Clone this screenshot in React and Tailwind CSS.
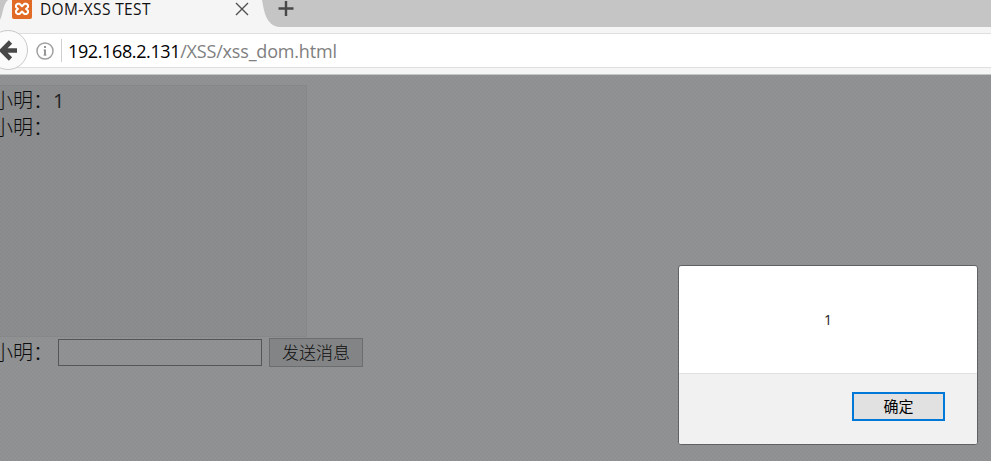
function Favicon() {
  return (
    <svg className="block shrink-0" width="20" height="19" viewBox="0 0 20 19">
      <rect x="0" y="-2" width="20" height="21" rx="2" fill="#e06a26" />
      <path d="M5.5 3.8H7.5L10 6.3L12.5 3.8H14.5L16 5.3V7L14 8.9L16 10.8V12.5L14.5 14H12.5L10 11.5L7.5 14H5.5L4 12.5V10.8L6 8.9L4 7V5.3Z" fill="none" stroke="#fff" strokeWidth="2" strokeLinejoin="round" />
    </svg>
  );
}

function TabBar() {
  return (
    <div className="flex h-[27px] bg-[#c5c5c5]">
      <svg className="block shrink-0 -mr-3" width="12" height="27" viewBox="0 0 12 27">
        <path d="M0 27V20C3 14 3 4 8 0H12V27Z" fill="#f5f5f5" />
      </svg>
      <div className="flex h-[27px] w-[262px] shrink-0 pl-3">
        <div className="flex h-[27px] w-full bg-[#f5f5f5]">
          <Favicon />
          <span className="ml-2 h-[18px] w-[195px] whitespace-nowrap text-[15.5px] leading-[18px] tracking-[0.37px] text-[#111]">DOM-XSS TEST</span>
          <svg className="mt-[2px] block shrink-0" width="14" height="14" viewBox="0 0 14 14">
            <path d="M1 1L13 13M13 1L1 13" stroke="#505050" strokeWidth="1.4" />
          </svg>
        </div>
      </div>
      <svg className="block shrink-0" width="40" height="27" viewBox="0 0 40 27">
        <path d="M0 0C2 9 3 26 18 27H0Z" fill="#f5f5f5" />
        <path d="M16.5 8.5H31.5M24 1V16" stroke="#484848" strokeWidth="2.4" />
      </svg>
    </div>
  );
}

function AddressBar() {
  return (
    <div className="flex h-[48px] items-start border-b border-[#c3c7c8] bg-[#f5f5f5]">
      <svg className="relative z-10 mt-[2px] -mr-7 block shrink-0" width="28" height="42" viewBox="0 0 28 42">
        <circle cx="8" cy="21" r="19.5" fill="#fbfbfb" stroke="#c9c9c9" />
        <path d="M17 21.5H3M10.5 13L2 21.5L10.5 30" fill="none" stroke="#484848" strokeWidth="4.6" />
      </svg>
      <div className="mt-[6px] flex h-[35px] flex-1 items-center border-y border-[#dfdfdf] bg-white pl-[36px]">
        <svg className="block shrink-0" width="18" height="18" viewBox="0 0 18 18">
          <circle cx="9" cy="9" r="8" fill="none" stroke="#a0a0a0" strokeWidth="1.5" />
          <path d="M9 4V6M9 7.6V13.4" stroke="#969696" strokeWidth="2" />
          <path d="M7.4 8H9M7.4 13H10.6" stroke="#969696" strokeWidth="0.8" />
        </svg>
        <div className="ml-[7px] h-[23px] w-px bg-[#cfcfcf]" />
        <span className="ml-[6px] whitespace-nowrap text-[18px] leading-[24px] tracking-[-0.18px] text-[#808080]">
          <span className="tracking-[-0.38px] text-black">192.168.2.131</span>/XSS/xss_dom.html
        </span>
      </div>
    </div>
  );
}

function Alert() {
  return (
    <div className="absolute left-[678px] top-[265px] flex h-[180px] w-[300px] flex-col overflow-hidden rounded-[3px] border border-[#606162] bg-white">
      <div className="flex h-[107px] items-center justify-center text-[14px] text-[#222]">1</div>
      <div className="flex flex-1 justify-end border-t border-[#e1e1e1] bg-[#f1f1f1] pr-8 pt-[18px]">
        <button className="flex h-[29px] w-[93px] items-center justify-center border-2 border-[#0078d7] bg-[#e1e1e1] text-[15px] leading-none text-black">确定</button>
      </div>
    </div>
  );
}

export default function App() {
  return (
    <div className="relative h-[461px] w-[991px] overflow-hidden bg-[#8f9091] font-['Open_Sans','Noto_Sans_CJK_SC',sans-serif]">
      <TabBar />
      <AddressBar />
      <main className="h-[386px] bg-[repeating-conic-gradient(#8d8f90_0_25%,#919293_0_50%)] bg-[length:4px_4px] pt-[10px] text-[#0c0c0d]">
        <div className="h-[252px] w-[307px] border-y border-r border-[#858788] bg-black/3 pt-px font-light">
          <div className="-ml-[7px] whitespace-nowrap text-[20px] leading-[27px]">小明：<span className="font-normal text-[#222324]">1</span></div>
          <div className="-ml-[7px] whitespace-nowrap text-[20px] leading-[27px]">小明：</div>
        </div>
        <div className="flex items-start pt-px font-light">
          <span className="-ml-[7px] w-[65px] shrink-0 whitespace-nowrap text-[20px] leading-[30px]">小明：</span>
          <input className="mt-px h-[27px] w-[204px] border border-[#555658] bg-transparent outline-none" />
          <button className="ml-[7px] h-[29px] w-[94px] border border-[#6c6d6e] bg-[#838485] text-[17px] leading-[27px]">发送消息</button>
        </div>
      </main>
      <Alert />
    </div>
  );
}
